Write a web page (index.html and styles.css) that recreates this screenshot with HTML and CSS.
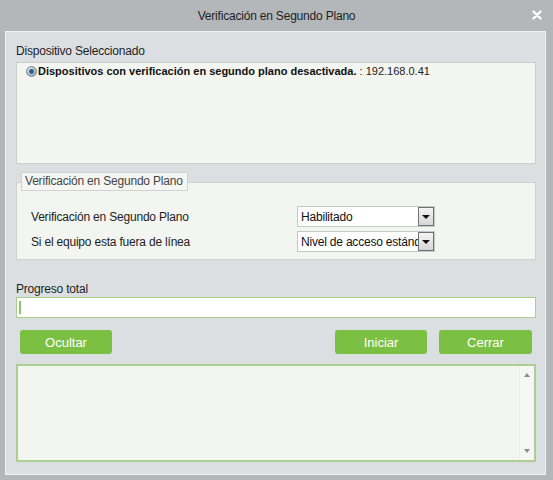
FILE: index.html
```html
<!DOCTYPE html>
<html>
<head>
<meta charset="utf-8">
<link rel="stylesheet" href="styles.css">
</head>
<body>
<div class="window">
  <div class="titlebar">
    <span class="title">Verificación en Segundo Plano</span>
    <svg class="close" width="10" height="10" viewBox="0 0 10 10">
      <path d="M1.5 1.5 L8.5 8.5 M8.5 1.5 L1.5 8.5" stroke="#ffffff" stroke-width="2.4" stroke-linecap="round"/>
    </svg>
  </div>
  <div class="body">
    <div class="label first">Dispositivo Seleccionado</div>
    <div class="panel">
      <div class="device">
        <svg class="radio" width="11" height="11" viewBox="0 0 11 11">
          <defs>
            <radialGradient id="rg" cx="40%" cy="35%" r="70%">
              <stop offset="0" stop-color="#e6eef5"/>
              <stop offset="1" stop-color="#8fa3b6"/>
            </radialGradient>
          </defs>
          <circle cx="5.5" cy="5.5" r="5" fill="url(#rg)" stroke="#7d8790" stroke-width="1"/>
          <circle cx="5.5" cy="5.5" r="2.4" fill="#2c5a86"/>
        </svg>
        <b>Dispositivos con verificación en segundo plano desactivada.</b><span>&nbsp;: 192.168.0.41</span>
      </div>
    </div>
    <div class="group">
      <div class="legend">Verificación en Segundo Plano</div>
      <div class="row r1">
        <span class="rlabel">Verificación en Segundo Plano</span>
        <div class="select"><span class="val">Habilitado</span><span class="arrow"></span></div>
      </div>
      <div class="row r2">
        <span class="rlabel">Si el equipo esta fuera de línea</span>
        <div class="select"><span class="val">Nivel de acceso estándar</span><span class="arrow"></span></div>
      </div>
    </div>
    <div class="label prog">Progreso total</div>
    <div class="progress"><span class="caret"></span></div>
    <div class="buttons">
      <button class="btn ocultar">Ocultar</button>
      <span class="spacer"></span>
      <button class="btn">Iniciar</button>
      <button class="btn cerrar">Cerrar</button>
    </div>
    <div class="log">
      <div class="logarea"></div>
      <div class="scroll">
        <span class="up"></span>
        <span class="down"></span>
      </div>
    </div>
  </div>
</div>
</body>
</html>
```
FILE: styles.css
```css
html, body {
  margin: 0;
  padding: 0;
}
body {
  width: 553px;
  height: 480px;
  overflow: hidden;
  font-family: "Liberation Sans", Arial, sans-serif;
  font-size: 12px;
  letter-spacing: -0.2px;
  color: #222;
}
.window {
  width: 553px;
  height: 480px;
  background: #b4b7ba;
  display: flex;
  flex-direction: column;
}
.titlebar {
  height: 31px;
  display: flex;
  align-items: center;
  justify-content: center;
  position: relative;
  flex: none;
}
.title {
  font-size: 12px;
  color: #1e1e1e;
}
.close {
  position: absolute;
  right: 11px;
  top: 10px;
}
.body {
  margin: 0 7px 0 5px;
  height: 442px;
  border: 1px solid #f1f2f2;
  background: #dcdfe2;
  padding: 0 9px 0 10px;
  flex: none;
}
.label {
  line-height: 16px;
  height: 16px;
  color: #1e1e1e;
}
.label.first {
  margin-top: 11px;
  margin-bottom: 3px;
}
.panel {
  height: 100px;
  border: 1px solid #cdcfcd;
  background: #f3f5f0;
}
.device {
  display: flex;
  align-items: center;
  height: 14px;
  margin-top: 1px;
  padding-left: 9px;
  white-space: nowrap;
  font-size: 11px;
  letter-spacing: 0;
}
.device b {
  color: #111;
}
.device span {
  color: #222;
}
.radio {
  margin-right: 1px;
  flex: none;
}
.group {
  margin-top: 18px;
  border: 1px solid #cfd1cf;
  background: #f3f5f1;
  height: 76px;
}
.legend {
  display: block;
  width: fit-content;
  margin-top: -11px;
  margin-left: 4px;
  height: 17px;
  line-height: 17px;
  border: 1px solid #d2d3d1;
  background: #f5f6f3;
  color: #444;
  padding: 0 4px 0 3px;
  white-space: nowrap;
}
.row {
  display: flex;
  align-items: center;
  padding-left: 14px;
}
.r1 {
  margin-top: 15px;
}
.r2 {
  margin-top: 4px;
}
.rlabel {
  width: 266px;
  color: #1e1e1e;
}
.select {
  width: 136px;
  height: 19px;
  border: 1px solid #c6c8c6;
  background: #ffffff;
  display: flex;
  align-items: center;
  position: relative;
  overflow: hidden;
}
.val {
  padding-left: 3px;
  white-space: nowrap;
  color: #111;
}
.arrow {
  position: absolute;
  right: 0;
  top: 0;
  width: 14px;
  height: 17px;
  border: 1px solid #6f7275;
  background: linear-gradient(#f4f4f4, #d6d6d6);
}
.arrow::after {
  content: "";
  position: absolute;
  left: 3px;
  top: 7px;
  border-left: 4px solid transparent;
  border-right: 4px solid transparent;
  border-top: 4px solid #111;
}
.label.prog {
  margin-top: 21px;
}
.progress {
  height: 19px;
  border: 1px solid #a9d08d;
  background: #ffffff;
  display: flex;
  align-items: center;
}
.caret {
  width: 2px;
  height: 13px;
  margin-left: 2px;
  background: #8cc56a;
}
.buttons {
  display: flex;
  margin-top: 12px;
  padding: 0 4px;
  gap: 12px;
}
.spacer {
  flex: 1;
}
.btn {
  width: 92px;
  height: 24px;
  border: none;
  border-radius: 3px;
  background: #7cc043;
  color: #ffffff;
  font-family: "Liberation Sans", Arial, sans-serif;
  font-size: 13px;
  padding: 0;
}
.btn.cerrar {
  width: 93px;
}
.log {
  margin-top: 10px;
  height: 94px;
  border: 2px solid #aacf90;
  background: #f3f5f0;
  display: flex;
}
.logarea {
  flex: 1;
}
.scroll {
  width: 14px;
  background: #f6f7f4;
  border-left: 1px solid #eceee9;
  position: relative;
}
.up, .down {
  position: absolute;
  left: 4px;
  border-left: 3px solid transparent;
  border-right: 3px solid transparent;
}
.up {
  top: 7px;
  border-bottom: 4px solid #8a8d90;
}
.down {
  bottom: 7px;
  border-top: 4px solid #8a8d90;
}
```
